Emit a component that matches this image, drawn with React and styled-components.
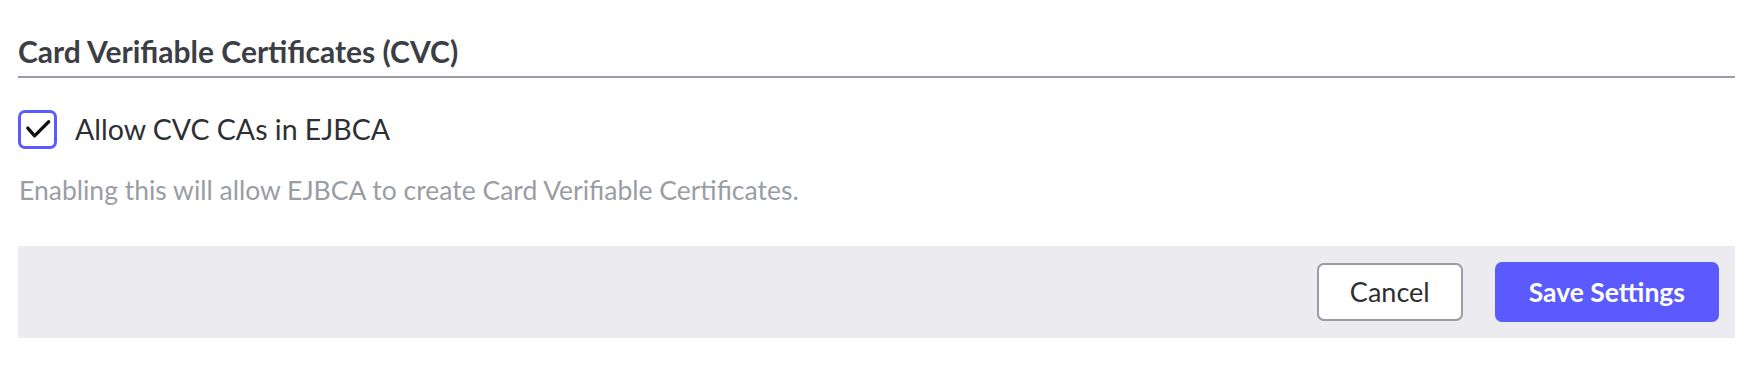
import React from "react";
import styled, { createGlobalStyle } from "styled-components";

const Global = createGlobalStyle`
  html, body { margin: 0; padding: 0; background: #ffffff; }
  body { font-family: Lato, "Noto Sans", "Liberation Sans", sans-serif; }
  * { box-sizing: border-box; }
`;

const Page = styled.div`
  width: 1760px;
  height: 392px;
  padding: 33px 25px 0 18px;
  background: #ffffff;
`;

const Heading = styled.h2`
  margin: 0;
  padding-bottom: 7px;
  font-size: 30px;
  line-height: 1.2;
  font-weight: 700;
  color: #3b3e44;
  border-bottom: 2px solid #9a9ca3;
`;

const CheckRow = styled.label`
  display: flex;
  align-items: center;
  gap: 18px;
  margin-top: 32px;
  cursor: pointer;
`;

const Box = styled.span`
  display: flex;
  align-items: center;
  justify-content: center;
  width: 39px;
  height: 39px;
  border: 3.5px solid #5a5aff;
  border-radius: 7px;
  background: #ffffff;
  flex: none;
`;

const Label = styled.span`
  font-size: 28.5px;
  line-height: 1.2;
  color: #2d2f33;
`;

const Help = styled.p`
  margin: 26px 0 0 1px;
  font-size: 26.5px;
  line-height: 1.2;
  color: #9b9da4;
`;

const Footer = styled.div`
  display: flex;
  justify-content: flex-end;
  align-items: center;
  gap: 32px;
  height: 92px;
  margin-top: 39px;
  padding: 0 16px;
  background: #ebebf0;
`;

const Button = styled.button`
  height: ${(p) => (p.$primary ? "60px" : "58px")};
  padding: 0 ${(p) => (p.$primary ? "34px" : "31px")};
  border-radius: 7px;
  font-family: Lato, "Noto Sans", "Liberation Sans", sans-serif;
  font-size: ${(p) => (p.$primary ? "26.5px" : "27px")};
  font-weight: ${(p) => (p.$primary ? 700 : 400)};
  color: ${(p) => (p.$primary ? "#ffffff" : "#2d2f33")};
  background: ${(p) => (p.$primary ? "#5a5aff" : "#ffffff")};
  border: ${(p) => (p.$primary ? "none" : "2px solid #9a9ca3")};
  cursor: pointer;
`;

export default function App() {
  return (
    <>
      <Global />
      <Page>
        <Heading>Card Verifiable Certificates (CVC)</Heading>
        <CheckRow>
          <Box>
            <svg width="32" height="32" viewBox="0 0 33 33" fill="none">
              <path
                d="M6 14.5 L13 22.5 L27.5 8"
                stroke="#111111"
                strokeWidth="3.4"
                strokeLinecap="round"
                strokeLinejoin="round"
              />
            </svg>
          </Box>
          <Label>Allow CVC CAs in EJBCA</Label>
        </CheckRow>
        <Help>Enabling this will allow EJBCA to create Card Verifiable Certificates.</Help>
        <Footer>
          <Button>Cancel</Button>
          <Button $primary>Save Settings</Button>
        </Footer>
      </Page>
    </>
  );
}
